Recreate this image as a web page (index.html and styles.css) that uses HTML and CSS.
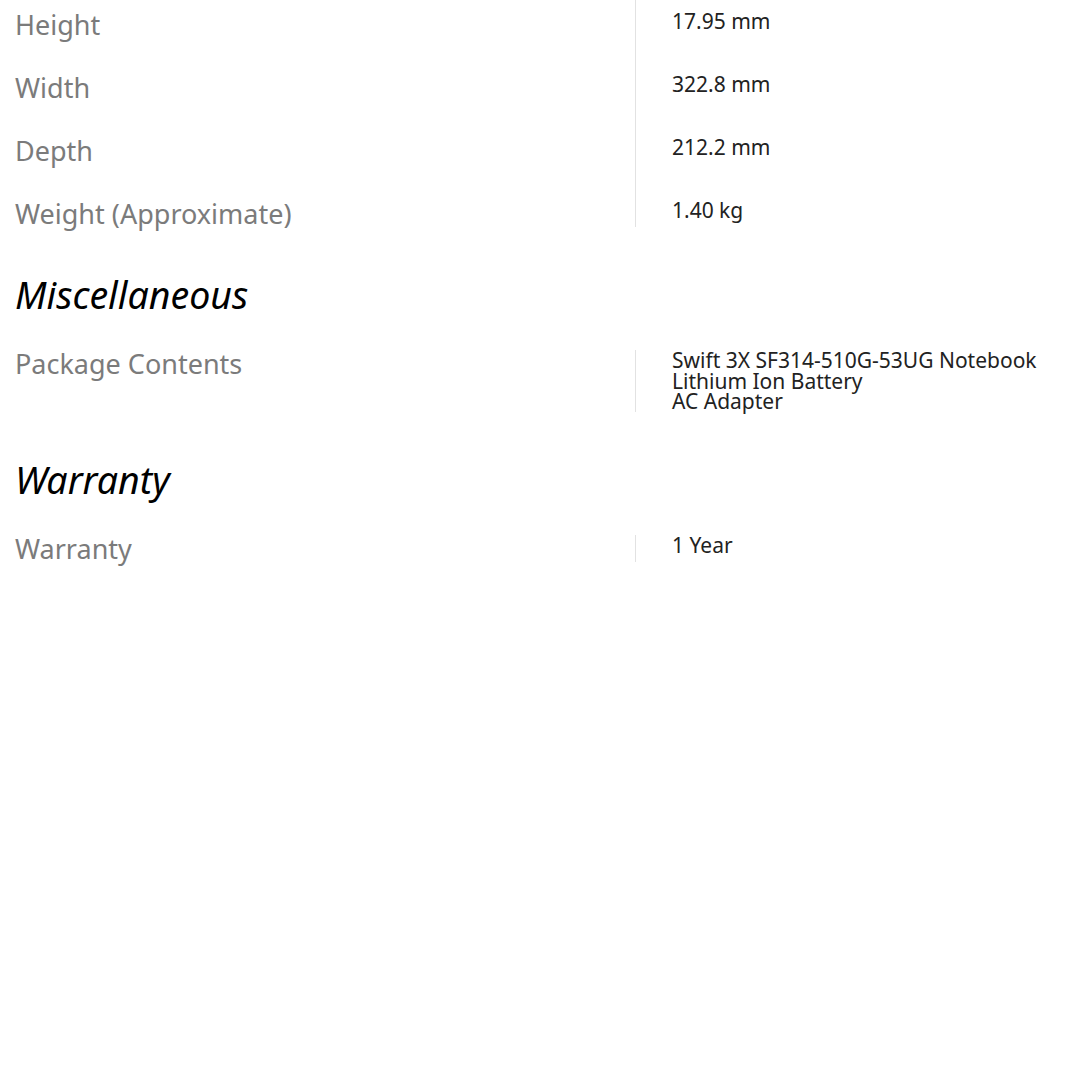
FILE: index.html
```html
<!DOCTYPE html>
<html>
<head>
	<title>Specifications</title>
	<meta content="width=device-width, initial-scale=1" name="viewport">
	<link rel="stylesheet" href="styles.css">
</head>
<body>
<article class="specs">
	<dl class="spec-group spec-group-first">
		<div class="spec-row">
			<dt>Height</dt>
			<dd>17.95 mm</dd>
		</div>
		<div class="spec-row">
			<dt>Width</dt>
			<dd>322.8 mm</dd>
		</div>
		<div class="spec-row">
			<dt>Depth</dt>
			<dd>212.2 mm</dd>
		</div>
		<div class="spec-row">
			<dt>Weight (Approximate)</dt>
			<dd>1.40 kg</dd>
		</div>
	</dl>

	<h3>Miscellaneous</h3>
	<dl class="spec-group">
		<div class="spec-row">
			<dt>Package Contents</dt>
			<dd>Swift 3X SF314-510G-53UG Notebook<br>Lithium Ion Battery<br>AC Adapter</dd>
		</div>
	</dl>

	<h3>Warranty</h3>
	<dl class="spec-group">
		<div class="spec-row">
			<dt>Warranty</dt>
			<dd>1 Year</dd>
		</div>
	</dl>
</article>
</body>
</html>
```

FILE: styles.css
```css
body {
	padding: 0;
	margin: 0;
	background: #fff;
	font-family: "Noto Sans", "Open Sans", sans-serif;
}

.specs {
	padding: 0 0 40px 15px;
}

.spec-group {
	margin: 0;
	padding: 0;
}

.spec-row {
	display: grid;
	grid-template-columns: 620px 1fr;
}

.spec-row dt,
.spec-row dd {
	padding-bottom: 36px;
}

.spec-row:last-child dt,
.spec-row:last-child dd {
	padding-bottom: 0;
}

.spec-group-first .spec-row:first-child dt,
.spec-group-first .spec-row:first-child dd {
	padding-top: 11px;
}

.spec-row dt {
	font-size: 27px;
	line-height: 27px;
	color: #7b7b7b;
}

.spec-row dd {
	margin: 0;
	padding-left: 36px;
	border-left: 1px solid #e2e2e2;
	font-size: 21px;
	line-height: 20.5px;
	color: #222;
}

.specs h3 {
	margin: 46px 0 34px;
	font-size: 37.5px;
	line-height: 43px;
	font-style: italic;
	font-weight: normal;
	color: #000;
}
```
